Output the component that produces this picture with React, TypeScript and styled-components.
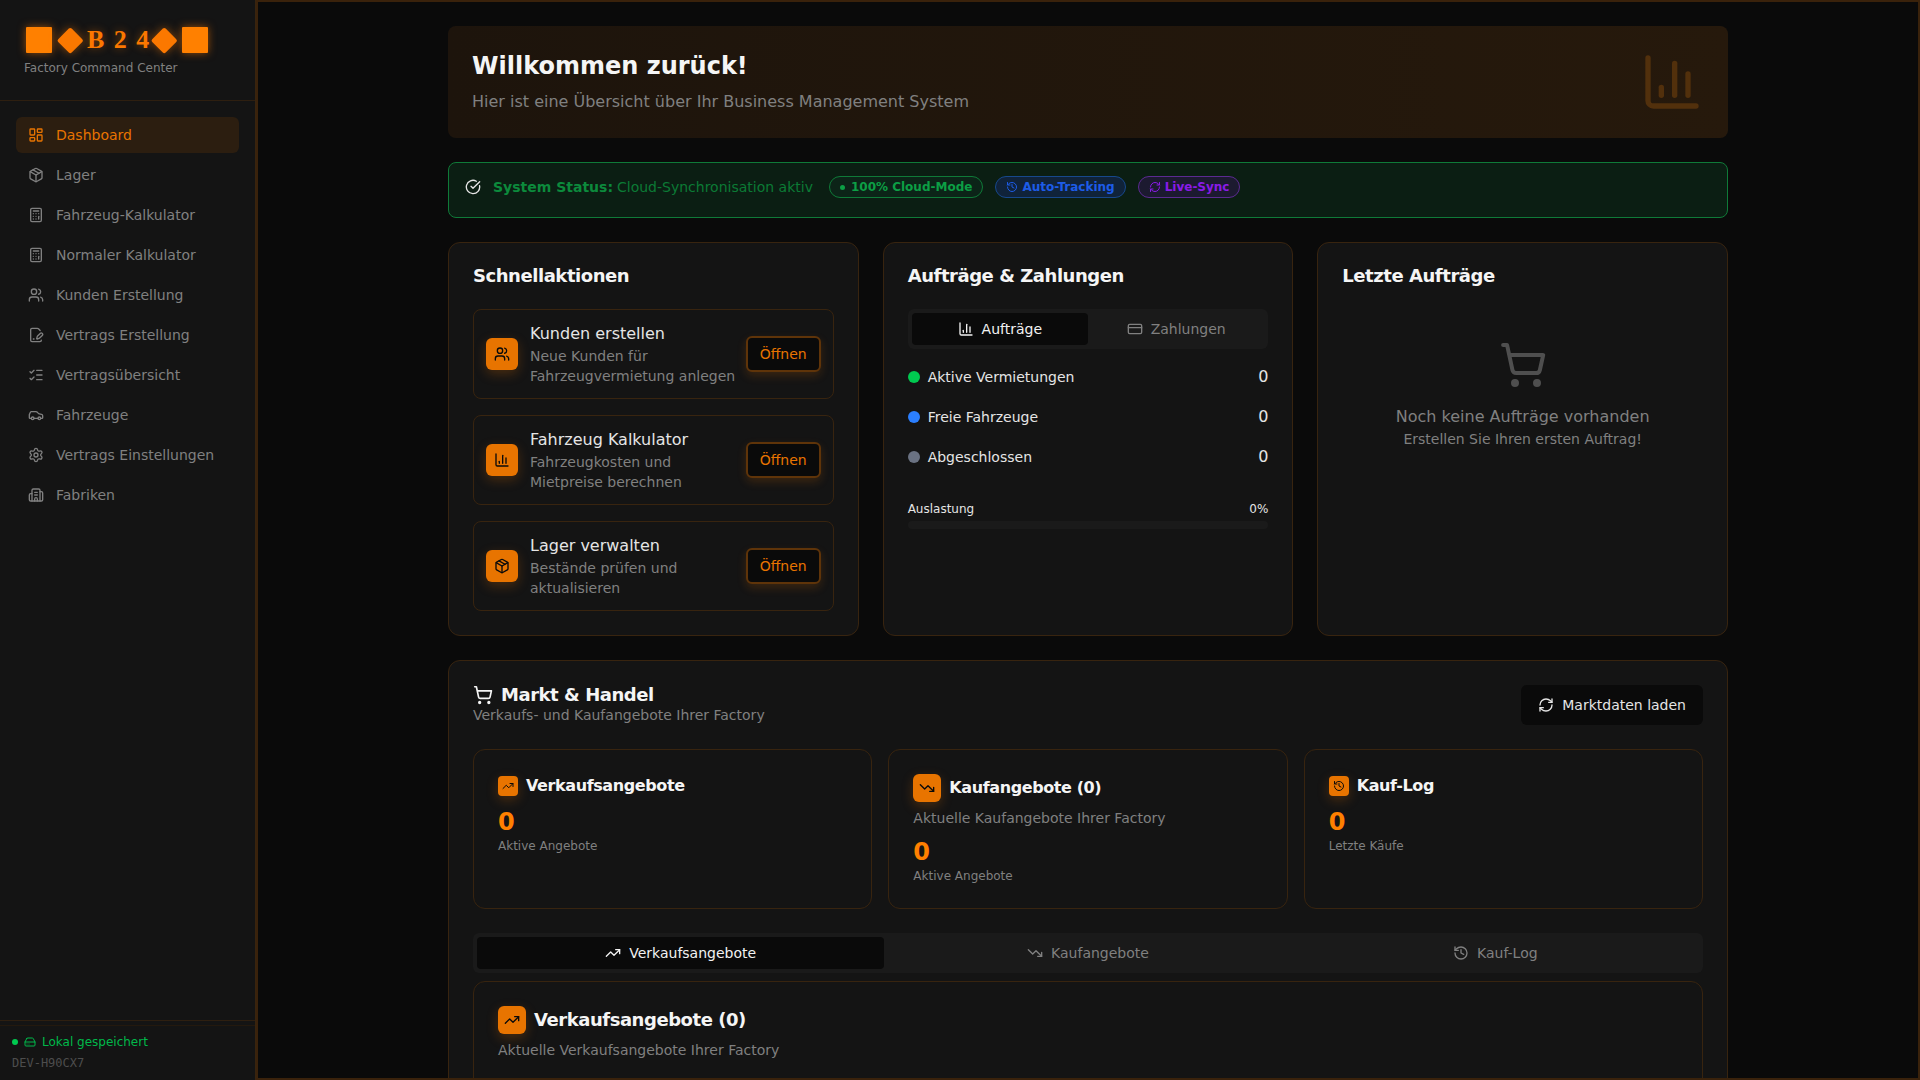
import React from "react";
import styled, { createGlobalStyle } from "styled-components";
import {
  LayoutDashboard, Package, Calculator, Users, FilePenLine, ListChecks, Car, Settings, Building2,
  ChartColumn, CreditCard, ShoppingCart, RefreshCw, TrendingUp, TrendingDown, History, HardDrive, CircleCheckBig,
} from "lucide-react";

const Global = createGlobalStyle`
  * { box-sizing: border-box; }
  html, body { margin: 0; padding: 0; height: 100%; background: #0a0a0a; overflow: hidden; }
  body { font-family: "DejaVu Sans", sans-serif; color: #f2f2f2; font-size: 14px; line-height: 20px; }
`;

const ORANGE = "#e87400";
const LINE = "#38240f";

const Shell = styled.div`display: flex; height: 100vh; overflow: hidden;`;

const Sidebar = styled.aside`
  width: 256px; flex: none; display: flex; flex-direction: column; height: 100%;
  background: #141414; border-right: 1px solid ${LINE};
`;
const Brand = styled.div`padding: 27px 24px 24px; border-bottom: 1px solid #2e1f10;`;
const LogoRow = styled.div`display: flex; align-items: center; padding-left: 2px; height: 26px;`;
const LogoSquare = styled.span`
  width: 26px; height: 26px; flex: none; background: #ff8000; border-radius: 1px;
  box-shadow: 0 0 8px rgba(255, 122, 0, .55);
`;
const LogoDiamond = styled.span`
  width: 26px; height: 26px; flex: none; display: flex; align-items: center; justify-content: center;
  margin: 0 5px;
  filter: drop-shadow(0 0 5px rgba(255, 122, 0, .5));
  &::before { content: ""; width: 18.5px; height: 18.5px; background: #fb7800; border-radius: 2px; transform: rotate(45deg); }
`;
const LogoText = styled.span`
  font-family: "Liberation Serif", serif; font-weight: 700; font-size: 26px; line-height: 26px;
  letter-spacing: 9.4px; color: #fb7800; text-shadow: 0 0 8px rgba(255, 122, 0, .45);
  margin: 0 -12.5px 0 -1px;
`;
const BrandSub = styled.div`margin-top: 7px; font-size: 12px; line-height: 16px; color: #808080;`;

const Nav = styled.nav`display: flex; flex-direction: column; gap: 4px; padding: 16px;`;
const NavItem = styled.div<{ $active?: boolean }>`
  display: flex; align-items: center; gap: 12px; height: 36px; padding: 0 12px; border-radius: 6px;
  font-size: 14px; color: ${(p) => (p.$active ? ORANGE : "#808080")};
  background: ${(p) => (p.$active ? "#2c1e10" : "transparent")};
  svg { flex: none; }
`;

const SideFooter = styled.div`margin-top: auto; border-top: 1px solid #2e1f10; padding-top: 4px;`;
const FooterInner = styled.div`border-top: 1px solid #23190e; padding: 8px 12px 9px;`;
const LocalRow = styled.div`display: flex; align-items: center; gap: 3px; height: 16px; font-size: 12px; color: #00b84a;`;
const LocalDot = styled.span`width: 6px; height: 6px; border-radius: 50%; background: #00c950; margin-right: 3px;`;
const LocalText = styled.span`margin-left: 3px;`;
const DeviceId = styled.div`margin-top: 5px; font-family: "DejaVu Sans Mono", monospace; font-size: 12px; line-height: 16px; color: #4d4d4d;`;

const Main = styled.main`flex: 1; min-width: 0; height: 100%; overflow: hidden; background: #0a0a0a; border: 2px solid #3a220b; padding-top: 24px;`;
const Content = styled.div`width: 1280px; margin: 0 auto; display: flex; flex-direction: column; gap: 24px;`;

const Hero = styled.section`
  height: 112px; padding: 24px; border-radius: 8px; display: flex; align-items: center; justify-content: space-between;
  background: linear-gradient(90deg, #1d140c, #26190c); color: #52300c;
`;
const HeroTitle = styled.h1`margin: 0; font-size: 24px; line-height: 32px; font-weight: 700; color: #f5f5f5;`;
const HeroSub = styled.p`margin: 8px 0 0; font-size: 16px; line-height: 24px; color: #808080;`;

const Status = styled.section`
  height: 56px; padding: 13px 16px 0; border: 1px solid #0f7a38; border-radius: 8px; background: #0b1e13;
  display: flex; align-items: flex-start; gap: 12px;
  > svg { margin-top: 3px; color: #e5e5e5; flex: none; }
`;
const StatusText = styled.div`display: flex; align-items: center; height: 22px; font-size: 14px; color: #0b7a35; gap: 4px;`;
const StatusStrong = styled.strong`font-weight: 700; color: #0c8a3c;`;
const Badges = styled.div`display: flex; gap: 12px; margin-left: 4px;`;
const Badge = styled.span<{ $fg: string; $bd: string; $bg: string }>`
  display: inline-flex; align-items: center; gap: 4px; height: 22px; padding: 0 10px; border-radius: 999px;
  font-size: 12px; font-weight: 700; color: ${(p) => p.$fg}; border: 1px solid ${(p) => p.$bd}; background: ${(p) => p.$bg};
`;
const BadgeDot = styled.span`width: 5px; height: 5px; border-radius: 50%; background: currentColor; margin-right: 2px;`;

const Grid = styled.div`display: grid; grid-template-columns: repeat(3, 1fr); gap: 24px;`;
const Card = styled.section`background: #141414; border: 1px solid ${LINE}; border-radius: 12px; padding: 24px;`;
const CardTitle = styled.h2`margin: 0 0 24px; font-size: 18px; line-height: 18px; font-weight: 700; letter-spacing: -0.45px; color: #f5f5f5;`;

const ActionList = styled.div`display: flex; flex-direction: column; gap: 16px;`;
const ActionRow = styled.div`
  display: flex; align-items: center; gap: 12px; padding: 12px; height: 90px;
  border: 1px solid ${LINE}; border-radius: 8px;
`;
const IconBox = styled.span<{ $size: number }>`
  width: ${(p) => p.$size}px; height: ${(p) => p.$size}px; flex: none; display: inline-flex; align-items: center; justify-content: center;
  background: ${ORANGE}; color: #0a0a0a; border-radius: ${(p) => (p.$size > 20 ? 6 : 4)}px;
  box-shadow: 0 4px 12px rgba(232, 116, 0, .25);
`;
const ActionText = styled.div`flex: 1; min-width: 0; margin-right: -4px;`;
const ActionTitle = styled.div`font-size: 16px; line-height: 24px; color: #e5e5e5;`;
const ActionDesc = styled.div`font-size: 14px; line-height: 20px; color: #808080;`;
const OpenButton = styled.button`
  flex: none; width: 75px; height: 36px; border: 2px solid #5f3409; border-radius: 6px; background: #0a0a0a; color: ${ORANGE};
  font: 14px "DejaVu Sans", sans-serif; box-shadow: 0 4px 10px rgba(232, 116, 0, .18); padding: 0;
`;

const TabBar = styled.div<{ $cols: number }>`
  display: grid; grid-template-columns: repeat(${(p) => p.$cols}, 1fr); height: 40px; padding: 4px;
  background: #1a1a1a; border-radius: 6px;
`;
const Tab = styled.div<{ $active?: boolean }>`
  display: flex; align-items: center; justify-content: center; gap: 8px; border-radius: 4px; font-size: 14px;
  color: ${(p) => (p.$active ? "#f2f2f2" : "#808080")}; background: ${(p) => (p.$active ? "#0a0a0a" : "transparent")};
`;

const MetricList = styled.div`display: flex; flex-direction: column; gap: 16px; margin-top: 16px;`;
const MetricRow = styled.div`display: flex; align-items: center; justify-content: space-between; height: 24px;`;
const MetricLabel = styled.span`display: flex; align-items: center; gap: 8px; font-size: 14px; color: #e5e5e5;`;
const MetricDot = styled.span<{ $c: string }>`width: 12px; height: 12px; border-radius: 50%; background: ${(p) => p.$c};`;
const MetricValue = styled.span`font-size: 16px; color: #e5e5e5;`;
const LoadHead = styled.div`display: flex; justify-content: space-between; margin-top: 32px; font-size: 12px; line-height: 16px; color: #e5e5e5;`;
const LoadTrack = styled.div`height: 8px; margin-top: 4px; border-radius: 999px; background: #1a1a1a;`;

const Empty = styled.div`display: flex; flex-direction: column; align-items: center; padding-top: 32px; color: #808080;`;
const EmptyIcon = styled.span`display: flex; color: #4f4f4f; margin-bottom: 16px;`;
const EmptyMain = styled.div`font-size: 16px; line-height: 24px;`;
const EmptySub = styled.div`font-size: 14px; line-height: 20px;`;

const MarketHead = styled.div`display: flex; justify-content: space-between; align-items: flex-start; margin-bottom: 24px;`;
const MarketTitle = styled.h2`display: flex; align-items: center; gap: 8px; height: 19px; padding-top: 1px; margin: 0; font-size: 18px; line-height: 18px; font-weight: 700; letter-spacing: -0.45px; color: #f5f5f5;`;
const MarketSub = styled.div`margin-top: 1px; font-size: 14px; line-height: 20px; color: #808080;`;
const ReloadButton = styled.button`
  display: flex; align-items: center; gap: 8px; height: 40px; padding: 0 17px; border: 0; border-radius: 6px; background: #0a0a0a;
  color: #e5e5e5; font: 14px "DejaVu Sans", sans-serif;
`;
const StatGrid = styled.div`display: grid; grid-template-columns: repeat(3, 1fr); gap: 16px; margin-bottom: 24px; height: 160px;`;
const StatCard = styled.div`border: 1px solid ${LINE}; border-radius: 12px; padding: 24px; background: #141414;`;
const StatHead = styled.div`display: flex; align-items: center; gap: 8px; min-height: 24px; margin-bottom: 8px;`;
const StatTitle = styled.div`font-size: 16px; line-height: 24px; font-weight: 700; letter-spacing: -0.4px; color: #f5f5f5;`;
const StatDesc = styled.div`margin: -2px 0 8px; font-size: 14px; line-height: 20px; color: #808080;`;
const StatValue = styled.div`font-size: 24px; line-height: 32px; font-weight: 700; color: #ff8000;`;
const StatLabel = styled.div`font-size: 12px; line-height: 16px; color: #808080;`;

const Panel = styled.div`margin-top: 8px; min-height: 220px; border: 1px solid ${LINE}; border-radius: 12px; padding: 24px; background: #141414;`;
const PanelHead = styled.div`display: flex; align-items: center; gap: 8px;`;
const PanelTitle = styled.div`font-size: 18px; line-height: 28px; font-weight: 700; letter-spacing: -0.45px; color: #f5f5f5;`;
const PanelSub = styled.div`margin-top: 6px; font-size: 14px; line-height: 20px; color: #808080;`;

const navItems = [
  { label: "Dashboard", icon: LayoutDashboard, active: true },
  { label: "Lager", icon: Package },
  { label: "Fahrzeug-Kalkulator", icon: Calculator },
  { label: "Normaler Kalkulator", icon: Calculator },
  { label: "Kunden Erstellung", icon: Users },
  { label: "Vertrags Erstellung", icon: FilePenLine },
  { label: "Vertragsübersicht", icon: ListChecks },
  { label: "Fahrzeuge", icon: Car },
  { label: "Vertrags Einstellungen", icon: Settings },
  { label: "Fabriken", icon: Building2 },
];

const actions = [
  { title: "Kunden erstellen", desc: "Neue Kunden für Fahrzeugvermietung anlegen", icon: Users },
  { title: "Fahrzeug Kalkulator", desc: "Fahrzeugkosten und Mietpreise berechnen", icon: ChartColumn },
  { title: "Lager verwalten", desc: "Bestände prüfen und aktualisieren", icon: Package },
];

const metrics = [
  { label: "Aktive Vermietungen", color: "#00c950" },
  { label: "Freie Fahrzeuge", color: "#2b7fff" },
  { label: "Abgeschlossen", color: "#6a7282" },
];

export default function App() {
  return (
    <Shell>
      <Global />
      <Sidebar>
        <Brand>
          <LogoRow>
            <LogoSquare />
            <LogoDiamond />
            <LogoText>B24</LogoText>
            <LogoDiamond />
            <LogoSquare />
          </LogoRow>
          <BrandSub>Factory Command Center</BrandSub>
        </Brand>
        <Nav>
          {navItems.map(({ label, icon: Icon, active }) => (
            <NavItem key={label} $active={active}>
              <Icon size={16} />
              {label}
            </NavItem>
          ))}
        </Nav>
        <SideFooter>
          <FooterInner>
            <LocalRow>
              <LocalDot />
              <HardDrive size={12} />
              <LocalText>Lokal gespeichert</LocalText>
            </LocalRow>
            <DeviceId>DEV-H90CX7</DeviceId>
          </FooterInner>
        </SideFooter>
      </Sidebar>
      <Main>
        <Content>
          <Hero>
            <div>
              <HeroTitle>Willkommen zurück!</HeroTitle>
              <HeroSub>Hier ist eine Übersicht über Ihr Business Management System</HeroSub>
            </div>
            <ChartColumn size={64} />
          </Hero>

          <Status>
            <CircleCheckBig size={16} />
            <StatusText>
              <StatusStrong>System Status:</StatusStrong> Cloud-Synchronisation aktiv
            </StatusText>
            <Badges>
              <Badge $fg="#0c9f45" $bd="#0f7a38" $bg="#0c2418"><BadgeDot />100% Cloud-Mode</Badge>
              <Badge $fg="#1d5ce8" $bd="#17488c" $bg="#10233a"><History size={12} />Auto-Tracking</Badge>
              <Badge $fg="#8a1be8" $bd="#5b2a91" $bg="#1c1a30"><RefreshCw size={12} />Live-Sync</Badge>
            </Badges>
          </Status>

          <Grid>
            <Card>
              <CardTitle>Schnellaktionen</CardTitle>
              <ActionList>
                {actions.map(({ title, desc, icon: Icon }) => (
                  <ActionRow key={title}>
                    <IconBox $size={32}><Icon size={16} /></IconBox>
                    <ActionText>
                      <ActionTitle>{title}</ActionTitle>
                      <ActionDesc>{desc}</ActionDesc>
                    </ActionText>
                    <OpenButton>Öffnen</OpenButton>
                  </ActionRow>
                ))}
              </ActionList>
            </Card>
            <Card>
              <CardTitle>Aufträge &amp; Zahlungen</CardTitle>
              <TabBar $cols={2}>
                <Tab $active><ChartColumn size={16} />Aufträge</Tab>
                <Tab><CreditCard size={16} />Zahlungen</Tab>
              </TabBar>
              <MetricList>
                {metrics.map((m) => (
                  <MetricRow key={m.label}>
                    <MetricLabel><MetricDot $c={m.color} />{m.label}</MetricLabel>
                    <MetricValue>0</MetricValue>
                  </MetricRow>
                ))}
              </MetricList>
              <LoadHead><span>Auslastung</span><span>0%</span></LoadHead>
              <LoadTrack />
            </Card>
            <Card>
              <CardTitle>Letzte Aufträge</CardTitle>
              <Empty>
                <EmptyIcon><ShoppingCart size={48} /></EmptyIcon>
                <EmptyMain>Noch keine Aufträge vorhanden</EmptyMain>
                <EmptySub>Erstellen Sie Ihren ersten Auftrag!</EmptySub>
              </Empty>
            </Card>
          </Grid>

          <Card>
            <MarketHead>
              <div>
                <MarketTitle><ShoppingCart size={20} />Markt &amp; Handel</MarketTitle>
                <MarketSub>Verkaufs- und Kaufangebote Ihrer Factory</MarketSub>
              </div>
              <ReloadButton><RefreshCw size={16} />Marktdaten laden</ReloadButton>
            </MarketHead>
            <StatGrid>
              <StatCard>
                <StatHead>
                  <IconBox $size={20}><TrendingUp size={12} /></IconBox>
                  <StatTitle>Verkaufsangebote</StatTitle>
                </StatHead>
                <StatValue>0</StatValue>
                <StatLabel>Aktive Angebote</StatLabel>
              </StatCard>
              <StatCard>
                <StatHead>
                  <IconBox $size={28}><TrendingDown size={16} /></IconBox>
                  <StatTitle>Kaufangebote (0)</StatTitle>
                </StatHead>
                <StatDesc>Aktuelle Kaufangebote Ihrer Factory</StatDesc>
                <StatValue>0</StatValue>
                <StatLabel>Aktive Angebote</StatLabel>
              </StatCard>
              <StatCard>
                <StatHead>
                  <IconBox $size={20}><History size={12} /></IconBox>
                  <StatTitle>Kauf-Log</StatTitle>
                </StatHead>
                <StatValue>0</StatValue>
                <StatLabel>Letzte Käufe</StatLabel>
              </StatCard>
            </StatGrid>
            <TabBar $cols={3}>
              <Tab $active><TrendingUp size={16} />Verkaufsangebote</Tab>
              <Tab><TrendingDown size={16} />Kaufangebote</Tab>
              <Tab><History size={16} />Kauf-Log</Tab>
            </TabBar>
            <Panel>
              <PanelHead>
                <IconBox $size={28}><TrendingUp size={16} /></IconBox>
                <PanelTitle>Verkaufsangebote (0)</PanelTitle>
              </PanelHead>
              <PanelSub>Aktuelle Verkaufsangebote Ihrer Factory</PanelSub>
            </Panel>
          </Card>
        </Content>
      </Main>
    </Shell>
  );
}
